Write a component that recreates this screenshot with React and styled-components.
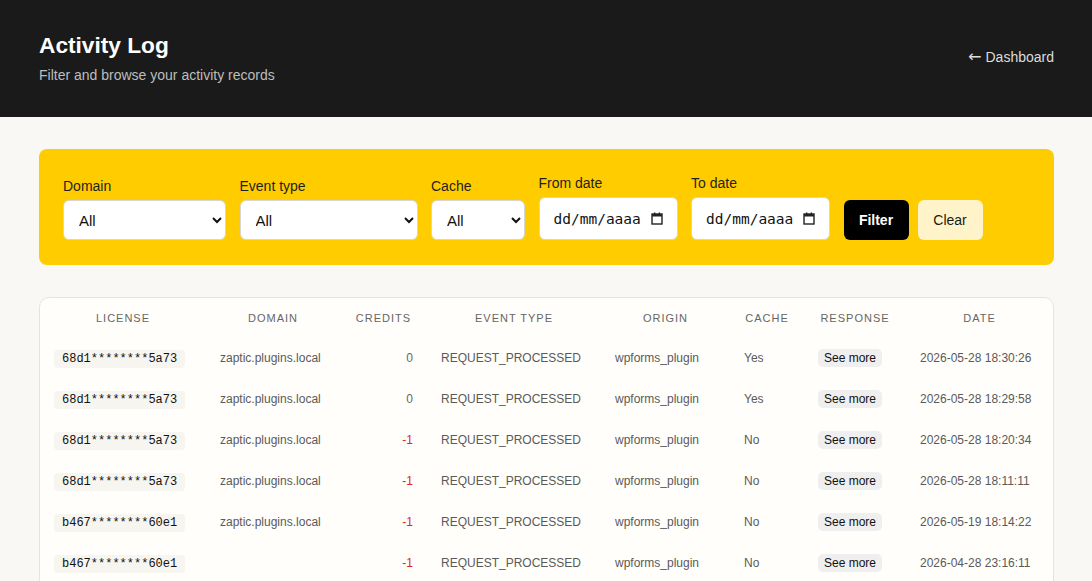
import React from 'react';
import styled, { createGlobalStyle } from 'styled-components';

const GlobalStyle = createGlobalStyle`
  body {
    margin: 0;
    background: #f9f8f4;
    font-family: "Liberation Sans", Arial, sans-serif;
    color: #222;
  }
`;

const Header = styled.header`
  background: #1a1a1a;
  height: 117px;
  box-sizing: border-box;
  padding: 0 38px 2px 39px;
  display: flex;
  align-items: center;
  justify-content: space-between;
`;

const Title = styled.h1`
  margin: 0 0 9px;
  font-size: 22.7px;
  line-height: 26px;
  font-weight: 700;
  color: #fff;
`;

const Subtitle = styled.p`
  margin: 0;
  font-size: 14px;
  line-height: 16px;
  color: #bdbdbd;
`;

const BackLink = styled.a`
  display: flex;
  align-items: center;
  gap: 4px;
  color: #dcdcdc;
  font-size: 14px;
  line-height: 16px;
  text-decoration: none;
  margin-bottom: 1px;
`;

const Arrow = styled.span`
  font-family: "DejaVu Sans", sans-serif;
  font-size: 16px;
  line-height: 16px;
`;

const Main = styled.main`
  padding: 32px 38px 0 39px;
  display: flex;
  flex-direction: column;
  gap: 32px;
`;

const FilterPanel = styled.form`
  background: #ffcc00;
  border-radius: 8px;
  padding: 26px 24px 25px;
  display: flex;
  align-items: flex-end;
  gap: 13.5px;
`;

const Field = styled.label`
  display: flex;
  flex-direction: column;
  gap: 6px;
  font-size: 14px;
  line-height: 16px;
  color: #1f1f1f;
`;

const Select = styled.select`
  width: ${p => p.$w}px;
  height: 40px;
  box-sizing: border-box;
  border: 1px solid #d6d6d6;
  border-radius: 6px;
  background: #fff;
  padding: 0 8px 0 11px;
  font-family: "Liberation Sans", Arial, sans-serif;
  font-size: 15px;
  color: #111;
`;

const DateBox = styled.div`
  width: 139px;
  height: 43px;
  box-sizing: border-box;
  border: 1px solid #d6d6d6;
  border-radius: 6px;
  background: #fff;
  padding: 0 14px;
  display: flex;
  align-items: center;
  justify-content: space-between;
  font-family: "DejaVu Sans Mono", monospace;
  font-size: 14.5px;
  color: #111;
`;

const Buttons = styled.div`
  display: flex;
  gap: 9px;
`;

const Button = styled.button`
  height: 40px;
  width: 65px;
  padding: 0;
  border: none;
  border-radius: 6px;
  font-family: "Liberation Sans", Arial, sans-serif;
  font-size: 14px;
  cursor: pointer;
  background: ${p => (p.$primary ? '#000' : '#fff4c9')};
  color: ${p => (p.$primary ? '#fff' : '#1a1a1a')};
  font-weight: ${p => (p.$primary ? 700 : 400)};
`;

const Card = styled.section`
  background: #fffefa;
  border: 1px solid #e6e4de;
  border-radius: 10px;
  overflow: hidden;
`;

const Table = styled.table`
  width: 100%;
  border-collapse: collapse;
  table-layout: fixed;
`;

const Th = styled.th`
  padding: 13px 14px;
  font-size: 11px;
  line-height: 14px;
  font-weight: 400;
  letter-spacing: 1px;
  text-transform: uppercase;
  color: #666;
  text-align: center;
`;

const Td = styled.td`
  padding: 11px 14px;
  font-size: 12px;
  line-height: 19px;
  color: ${p => p.$color || '#5a5a5a'};
  text-align: ${p => p.$align || 'left'};
  white-space: nowrap;
`;

const Code = styled.code`
  display: inline-block;
  background: #f6f5f0;
  border-radius: 4px;
  padding: 0 8px;
  line-height: 18px;
  font-family: "Liberation Mono", monospace;
  font-size: 12px;
  color: #111;
`;

const SeeMore = styled.button`
  border: none;
  background: #efefef;
  border-radius: 5px;
  padding: 0 6px;
  height: 18px;
  font-family: "Liberation Sans", Arial, sans-serif;
  font-size: 12px;
  color: #111;
  cursor: pointer;
`;

const CalendarIcon = () => (
  <svg width="12" height="13" viewBox="0 0 12 13" fill="none">
    <rect x="1" y="2" width="10" height="10" stroke="#222" strokeWidth="1.4" />
    <rect x="1" y="2" width="10" height="2.5" fill="#222" />
    <rect x="3" y="0.5" width="1.4" height="2" fill="#222" />
    <rect x="7.6" y="0.5" width="1.4" height="2" fill="#222" />
  </svg>
);

const columns = [
  ['License', 166],
  ['Domain', 134],
  ['Credits', 87],
  ['Event type', 174],
  ['Origin', 129],
  ['Cache', 74],
  ['Response', 102],
  ['Date', 147],
];

const rows = [
  ['68d1********5a73', 'zaptic.plugins.local', 0, 'Yes', '2026-05-28 18:30:26'],
  ['68d1********5a73', 'zaptic.plugins.local', 0, 'Yes', '2026-05-28 18:29:58'],
  ['68d1********5a73', 'zaptic.plugins.local', -1, 'No', '2026-05-28 18:20:34'],
  ['68d1********5a73', 'zaptic.plugins.local', -1, 'No', '2026-05-28 18:11:11'],
  ['b467********60e1', 'zaptic.plugins.local', -1, 'No', '2026-05-19 18:14:22'],
  ['b467********60e1', '', -1, 'No', '2026-04-28 23:16:11'],
  ['b467********60e1', '', -1, 'No', '2026-04-28 23:10:05'],
];

export default function App() {
  return (
    <>
      <GlobalStyle />
      <Header>
        <div>
          <Title>Activity Log</Title>
          <Subtitle>Filter and browse your activity records</Subtitle>
        </div>
        <BackLink href="#"><Arrow>←</Arrow>Dashboard</BackLink>
      </Header>
      <Main>
        <FilterPanel onSubmit={e => e.preventDefault()}>
          <Field>
            Domain
            <Select $w={163}><option>All</option></Select>
          </Field>
          <Field>
            Event type
            <Select $w={178}><option>All</option></Select>
          </Field>
          <Field>
            Cache
            <Select $w={94}><option>All</option></Select>
          </Field>
          <Field>
            From date
            <DateBox>dd/mm/aaaa<CalendarIcon /></DateBox>
          </Field>
          <Field>
            To date
            <DateBox>dd/mm/aaaa<CalendarIcon /></DateBox>
          </Field>
          <Buttons>
            <Button $primary type="submit">Filter</Button>
            <Button type="button">Clear</Button>
          </Buttons>
        </FilterPanel>
        <Card>
          <Table>
            <colgroup>
              {columns.map(([name, w]) => <col key={name} style={{ width: w }} />)}
            </colgroup>
            <thead>
              <tr>
                {columns.map(([name]) => <Th key={name}>{name}</Th>)}
              </tr>
            </thead>
            <tbody>
              {rows.map(([license, domain, credits, cache, date], i) => (
                <tr key={i}>
                  <Td><Code>{license}</Code></Td>
                  <Td>{domain}</Td>
                  <Td $align="right" $color={credits < 0 ? '#e02424' : '#666'}>{credits}</Td>
                  <Td>REQUEST_PROCESSED</Td>
                  <Td>wpforms_plugin</Td>
                  <Td>{cache}</Td>
                  <Td><SeeMore type="button">See more</SeeMore></Td>
                  <Td>{date}</Td>
                </tr>
              ))}
            </tbody>
          </Table>
        </Card>
      </Main>
    </>
  );
}
